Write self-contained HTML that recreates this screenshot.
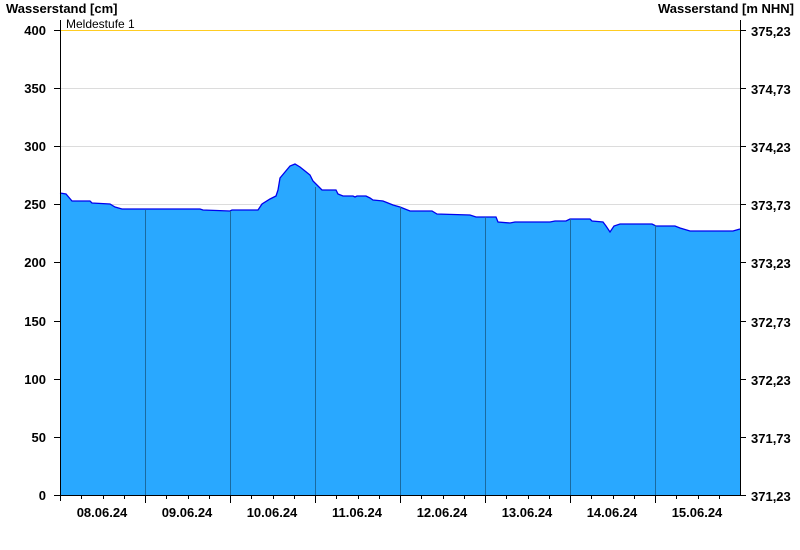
<!DOCTYPE html>
<html><head><style>body{margin:0;background:#fff}svg{display:block}text{font-family:"Liberation Sans",Arial,sans-serif;font-size:13px;font-weight:bold;fill:#000}</style></head><body>
<svg width="800" height="550" viewBox="0 0 800 550">
<g stroke="#dcdcdc" stroke-width="1">
<line x1="60" y1="437.5" x2="740" y2="437.5"/><line x1="60" y1="379.5" x2="740" y2="379.5"/><line x1="60" y1="321.5" x2="740" y2="321.5"/><line x1="60" y1="262.5" x2="740" y2="262.5"/><line x1="60" y1="204.5" x2="740" y2="204.5"/><line x1="60" y1="146.5" x2="740" y2="146.5"/><line x1="60" y1="88.5" x2="740" y2="88.5"/>
</g>
<polygon fill="#29a8ff" points="60,495 60,193 66,194 72,201 90,201 92,203 110,204 115,207 122,209 145,209 200,209 203,210 230,211 232,210 258,210 262,204 270,199 276,196 278,190 280,178 285,172 290,166 295,164 300,167 305,171 310,175 313,181 318,186 322,190 336,190 338,194 343,196 353,196 355,197 357,196 366,196 370,198 373,200 383,201 388,203 393,205 400,207 410,211 432,211 437,214 470,215 476,217 496,217 498,222 510,223 515,222 550,222 555,221 566,221 570,219 590,219 592,221 603,222 606,226 610,232 614,226 620,224 652,224 656,226 675,226 680,228 690,231 733,231 740,229 740,495"/>
<polyline fill="none" stroke="#0000ee" stroke-width="1.3" points="60,193 66,194 72,201 90,201 92,203 110,204 115,207 122,209 145,209 200,209 203,210 230,211 232,210 258,210 262,204 270,199 276,196 278,190 280,178 285,172 290,166 295,164 300,167 305,171 310,175 313,181 318,186 322,190 336,190 338,194 343,196 353,196 355,197 357,196 366,196 370,198 373,200 383,201 388,203 393,205 400,207 410,211 432,211 437,214 470,215 476,217 496,217 498,222 510,223 515,222 550,222 555,221 566,221 570,219 590,219 592,221 603,222 606,226 610,232 614,226 620,224 652,224 656,226 675,226 680,228 690,231 733,231 740,229"/>
<g stroke="#1a6aa0" stroke-width="1">
<line x1="145.5" y1="210" x2="145.5" y2="495"/><line x1="230.5" y1="211" x2="230.5" y2="495"/><line x1="315.5" y1="187" x2="315.5" y2="495"/><line x1="400.5" y1="207" x2="400.5" y2="495"/><line x1="485.5" y1="217" x2="485.5" y2="495"/><line x1="570.5" y1="219" x2="570.5" y2="495"/><line x1="655.5" y1="225" x2="655.5" y2="495"/>
</g>
<line x1="60" y1="30.5" x2="740" y2="30.5" stroke="#ffcc22" stroke-width="1"/>
<g stroke="#000" stroke-width="1">
<line x1="60.5" y1="20" x2="60.5" y2="501"/><line x1="740.5" y1="20" x2="740.5" y2="495"/><line x1="54" y1="495.5" x2="741" y2="495.5"/>
<line x1="54" y1="30.5" x2="60" y2="30.5"/><line x1="54" y1="88.5" x2="60" y2="88.5"/><line x1="54" y1="146.5" x2="60" y2="146.5"/><line x1="54" y1="204.5" x2="60" y2="204.5"/><line x1="54" y1="262.5" x2="60" y2="262.5"/><line x1="54" y1="321.5" x2="60" y2="321.5"/><line x1="54" y1="379.5" x2="60" y2="379.5"/><line x1="54" y1="437.5" x2="60" y2="437.5"/>
<line x1="740" y1="30.5" x2="746" y2="30.5"/><line x1="740" y1="88.5" x2="746" y2="88.5"/><line x1="740" y1="146.5" x2="746" y2="146.5"/><line x1="740" y1="204.5" x2="746" y2="204.5"/><line x1="740" y1="262.5" x2="746" y2="262.5"/><line x1="740" y1="321.5" x2="746" y2="321.5"/><line x1="740" y1="379.5" x2="746" y2="379.5"/><line x1="740" y1="437.5" x2="746" y2="437.5"/><line x1="740" y1="495.5" x2="746" y2="495.5"/>
<line x1="145.5" y1="495" x2="145.5" y2="503"/><line x1="230.5" y1="495" x2="230.5" y2="503"/><line x1="315.5" y1="495" x2="315.5" y2="503"/><line x1="400.5" y1="495" x2="400.5" y2="503"/><line x1="485.5" y1="495" x2="485.5" y2="503"/><line x1="570.5" y1="495" x2="570.5" y2="503"/><line x1="655.5" y1="495" x2="655.5" y2="503"/>
</g>
<g stroke="#000" stroke-width="1">
<path d="M81.5 495v4M103.5 495v4M124.5 495v4M166.5 495v4M188.5 495v4M209.5 495v4M251.5 495v4M273.5 495v4M294.5 495v4M336.5 495v4M358.5 495v4M379.5 495v4M421.5 495v4M443.5 495v4M464.5 495v4M506.5 495v4M528.5 495v4M549.5 495v4M591.5 495v4M613.5 495v4M634.5 495v4M676.5 495v4M698.5 495v4M719.5 495v4"/>
</g>
<text x="6" y="13">Wasserstand [cm]</text>
<text x="794" y="13" text-anchor="end">Wasserstand [m NHN]</text>
<text x="66" y="28" style="font-weight:normal;font-size:12px">Meldestufe 1</text>
<g text-anchor="end">
<text x="46" y="35">400</text><text x="46" y="93">350</text><text x="46" y="151">300</text><text x="46" y="209">250</text><text x="46" y="267">200</text><text x="46" y="326">150</text><text x="46" y="384">100</text><text x="46" y="442">50</text><text x="46" y="500">0</text>
</g>
<g>
<text x="751" y="36">375,23</text><text x="751" y="94">374,73</text><text x="751" y="152">374,23</text><text x="751" y="210">373,73</text><text x="751" y="268">373,23</text><text x="751" y="327">372,73</text><text x="751" y="385">372,23</text><text x="751" y="443">371,73</text><text x="751" y="501">371,23</text>
</g>
<g text-anchor="middle">
<text x="102" y="517">08.06.24</text><text x="187" y="517">09.06.24</text><text x="272" y="517">10.06.24</text><text x="357" y="517">11.06.24</text><text x="442" y="517">12.06.24</text><text x="527" y="517">13.06.24</text><text x="612" y="517">14.06.24</text><text x="697" y="517">15.06.24</text>
</g>
</svg>
</body></html>
